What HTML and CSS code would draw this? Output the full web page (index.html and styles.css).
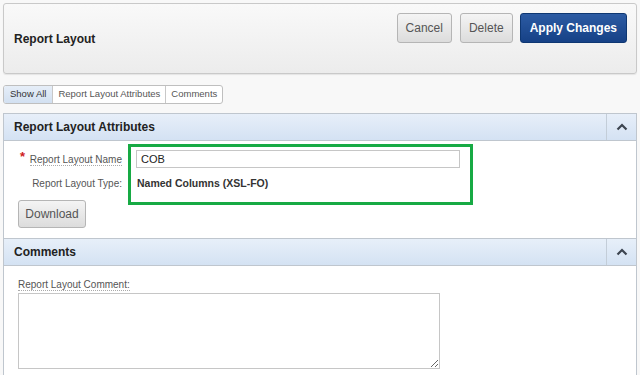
FILE: index.html
```html
<!DOCTYPE html>
<html lang="en">
<head>
    <meta charset="UTF-8">
    <title>Report Layout</title>
    <link rel="stylesheet" href="styles.css">
</head>
<body>
    <!-- Page header with actions -->
    <div class="page-header">
        <div class="page-title">Report Layout</div>
        <div class="actions">
            <button class="btn">Cancel</button>
            <button class="btn">Delete</button>
            <button class="btn btn-hot">Apply Changes</button>
        </div>
    </div>

    <!-- Region tabs -->
    <div class="tabs">
        <span class="tab active">Show All</span>
        <span class="tab">Report Layout Attributes</span>
        <span class="tab">Comments</span>
    </div>

    <!-- Attributes region -->
    <div class="region">
        <div class="region-header">
            <div class="region-title">Report Layout Attributes</div>
            <div class="region-toggle">
                <svg width="12" height="8" viewBox="0 0 12 8"><path d="M1.5 6.5 L6 2 L10.5 6.5" fill="none" stroke="#3d4550" stroke-width="2.2"/></svg>
            </div>
        </div>
        <div class="region-body attrs">
            <div class="form-row">
                <label class="label required"><span class="star">*</span><span class="dotted">Report Layout Name</span></label>
                <input class="text-input" type="text" value="COB">
            </div>
            <div class="form-row">
                <span class="label">Report Layout Type:</span>
                <span class="value">Named Columns (XSL-FO)</span>
            </div>
            <button class="btn btn-small">Download</button>
            <div class="highlight"></div>
        </div>
    </div>

    <!-- Comments region -->
    <div class="region region-next">
        <div class="region-header">
            <div class="region-title">Comments</div>
            <div class="region-toggle">
                <svg width="12" height="8" viewBox="0 0 12 8"><path d="M1.5 6.5 L6 2 L10.5 6.5" fill="none" stroke="#3d4550" stroke-width="2.2"/></svg>
            </div>
        </div>
        <div class="region-body comments">
            <label class="comment-label"><span class="dotted">Report Layout Comment:</span></label>
            <textarea class="comment-box"></textarea>
        </div>
    </div>
</body>
</html>
```

FILE: styles.css
```css
/* Base */
* {
    margin: 0;
    padding: 0;
    box-sizing: border-box;
    font-family: 'Liberation Sans', Arial, sans-serif;
}

body {
    background: #f8f8f8;
    padding: 3px;
    color: #333;
    height: 375px;
    overflow: hidden;
}

/* Page header */
.page-header {
    height: 71px;
    display: flex;
    justify-content: space-between;
    border: 1px solid #c9c9c9;
    border-radius: 3px;
    background: linear-gradient(#f9f9f9, #ececec);
    box-shadow: 0 1px 1px rgba(0, 0, 0, 0.08);
    padding: 9px 9px 0 10px;
}

.page-title {
    font-size: 12px;
    font-weight: bold;
    color: #222;
    margin-top: 19px;
}

.actions {
    display: flex;
    gap: 7px;
    height: 30px;
}

.btn {
    height: 30px;
    padding: 0 8px;
    border: 1px solid #b5b5b5;
    border-radius: 3px;
    background: linear-gradient(#f4f4f4, #dcdcdc);
    color: #555;
    font-size: 12px;
    cursor: pointer;
}

.btn:nth-child(2) {
    margin-left: 1px;
}

.btn-hot {
    border-color: #0e3772;
    background: linear-gradient(#2c5ba3, #164186);
    color: #fff;
    font-weight: bold;
    padding: 0 9px;
}

/* Tabs */
.tabs {
    display: flex;
    margin-top: 11px;
    width: max-content;
    border: 1px solid #bfbfbf;
    border-radius: 3px;
    overflow: hidden;
    background: #fff;
}

.tab {
    height: 17px;
    line-height: 16px;
    font-size: 9.5px;
    padding: 0 5px;
    color: #555;
    border-left: 1px solid #c8c8c8;
}

.tab:first-child {
    border-left: none;
    padding: 0 6px;
}

.tab.active {
    background: linear-gradient(#e6eef8, #d2e0f1);
    color: #333;
}

/* Regions */
.region {
    margin-top: 9px;
    border: 1px solid #bfc6ce;
    background: #fff;
}

.region-next {
    margin-top: -1px;
}

.region-header {
    display: flex;
    height: 27px;
    background: linear-gradient(#e7eff9, #d4e2f3);
    border-bottom: 1px solid #bfc6ce;
}

.region-title {
    flex: 1;
    font-size: 12px;
    font-weight: bold;
    color: #222;
    padding: 6px 0 0 10px;
}

.region-toggle {
    width: 30px;
    border-left: 1px solid #c3cdd8;
    display: flex;
    align-items: center;
    justify-content: center;
}

.region-body {
    position: relative;
}

.attrs {
    padding: 9px 0 9px 14px;
    height: 97px;
}

.form-row {
    display: flex;
    align-items: center;
    gap: 14px;
    height: 18px;
    font-size: 10px;
}

.form-row + .form-row {
    margin-top: 6px;
}

.label {
    width: 104px;
    text-align: right;
    color: #555;
    position: relative;
    white-space: nowrap;
}

.star {
    position: absolute;
    left: 2px;
    top: -5px;
    color: #d01c1c;
    font-size: 13px;
    font-weight: bold;
}

.dotted {
    border-bottom: 1px dotted #aaa;
}

.value {
    font-weight: bold;
    color: #333;
    font-size: 10.5px;
    padding-left: 1px;
}

.text-input {
    width: 324px;
    height: 18px;
    border: 1px solid #c6c6c6;
    font-size: 11px;
    padding-left: 4px;
    color: #222;
}

.btn-small {
    margin-top: 8px;
    height: 28px;
    width: 68px;
    padding: 0;
    font-size: 12px;
}

/* Annotation box drawn over the form */
.highlight {
    position: absolute;
    left: 124px;
    top: 3px;
    width: 345px;
    height: 61px;
    border: 3px solid #17aa44;
}

.comments {
    padding: 13px 0 0 14px;
    height: 120px;
}

.comment-label {
    display: block;
    font-size: 10px;
    color: #555;
}

.comment-box {
    display: block;
    margin-top: 3px;
    width: 422px;
    height: 76px;
    border: 1px solid #c6c6c6;
    resize: both;
}
```
